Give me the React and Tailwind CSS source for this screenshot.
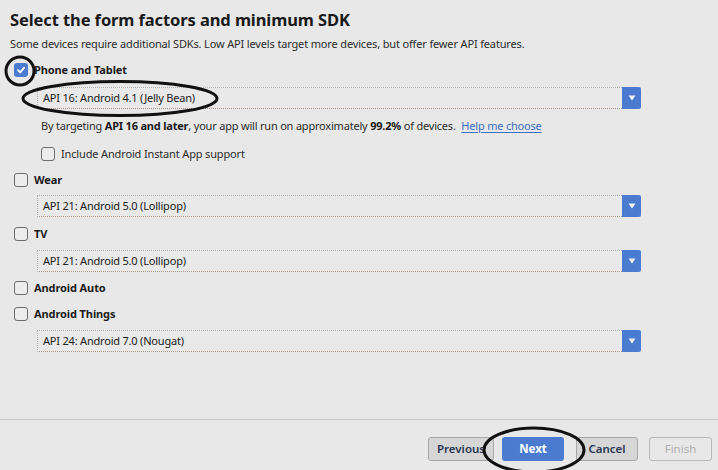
import React from "react";

const Checkbox = ({ checked }) =>
  checked ? (
    <div className="w-[14px] h-[14px] rounded-[3px] bg-[#4a7bd0] flex items-center justify-center shrink-0">
      <svg width="10" height="10" viewBox="0 0 10 10">
        <path d="M2 5.2 L4.2 7.4 L8.2 2.6" fill="none" stroke="#fff" strokeWidth="1.8" strokeLinecap="round" strokeLinejoin="round" />
      </svg>
    </div>
  ) : (
    <div className="w-[14px] h-[14px] rounded-[3px] border border-[#6e6e6e] bg-[#ececec] shrink-0" />
  );

const Option = ({ label, checked, className = "" }) => (
  <div className={`flex items-center h-4 pl-[14px] gap-[6px] ${className}`}>
    <Checkbox checked={checked} />
    <span className="text-[11px] tracking-[-0.1px] font-bold text-[#1c1c1c]">{label}</span>
  </div>
);

const Dropdown = ({ value, className = "" }) => (
  <div className={`ml-[37px] w-[604px] h-[22px] flex ${className}`}>
    <div className="flex-1 flex items-center pl-[5px] border border-dotted border-[#b0b0b0] border-r-0 border-b-[#a89888] bg-[#e9e9e9] text-[11px] tracking-[-0.2px] text-[#222]">
      {value}
    </div>
    <div className="w-[19px] bg-[#4a7bd0] rounded-r-[2px] flex items-center justify-center">
      <svg width="8" height="6" viewBox="0 0 8 6">
        <path d="M0.5 0.5 H7.5 L4 5.5 Z" fill="#f2f2f2" />
      </svg>
    </div>
  </div>
);

export default function App() {
  return (
    <div
      className="relative w-[718px] h-[470px] bg-[#e8e8e8] flex flex-col overflow-hidden"
      style={{ fontFamily: '"Noto Sans", "Open Sans", sans-serif' }}
    >
      <div className="flex flex-col flex-1">
        <h1 className="mt-[8px] ml-[10px] text-[16.5px] tracking-[-0.1px] leading-[24px] font-bold text-[#1a1a1a]">
          Select the form factors and minimum SDK
        </h1>
        <p className="mt-[4px] ml-[10px] text-[11px] tracking-[-0.15px] leading-[16px] text-[#2c2c2c]">
          Some devices require additional SDKs. Low API levels target more devices, but offer fewer API features.
        </p>

        <Option label="Phone and Tablet" checked className="mt-[10px]" />
        <Dropdown value="API 16: Android 4.1 (Jelly Bean)" className="mt-[9px]" />
        <p className="mt-[9px] ml-[41px] text-[11px] tracking-[-0.2px] leading-[16px] text-[#2c2c2c]">
          By targeting <b className="text-[#1a1a1a]">API 16 and later</b>, your app will run on approximately{" "}
          <b className="text-[#1a1a1a]">99.2%</b> of devices.{" "}
          <span className="ml-[3px] text-[#3d6fc4] underline underline-offset-2">Help me choose</span>
        </p>
        <div className="mt-[12px] ml-[41px] flex items-center h-4 gap-[6px]">
          <Checkbox />
          <span className="text-[11px] tracking-[-0.15px] text-[#2c2c2c]">Include Android Instant App support</span>
        </div>

        <Option label="Wear" className="mt-[10px]" />
        <Dropdown value="API 21: Android 5.0 (Lollipop)" className="mt-[7px]" />
        <Option label="TV" className="mt-[9px]" />
        <Dropdown value="API 21: Android 5.0 (Lollipop)" className="mt-[8px]" />
        <Option label="Android Auto" className="mt-[8px]" />
        <Option label="Android Things" className="mt-[10px]" />
        <Dropdown value="API 24: Android 7.0 (Nougat)" className="mt-[8px]" />
      </div>

      {/* footer */}
      <div className="h-[51px] border-t border-[#c8c8c8] flex justify-end pr-[6px] pt-[17px] text-[11.5px]">
        <div className="flex items-start gap-[8px]">
          <button className="w-[66px] h-[24px] rounded-[3px] border border-[#a8a8a8] bg-[#d6d6d6] font-semibold text-[#2a3550]">
            Previous
          </button>
          <button className="w-[62px] h-[24px] rounded-[3px] bg-[#4a7bd0] font-bold text-white">
            Next
          </button>
          <button className="ml-[4px] w-[62px] h-[24px] rounded-[3px] border border-[#a8a8a8] bg-[#d6d6d6] font-semibold text-[#2a3550]">
            Cancel
          </button>
          <button className="ml-[3px] w-[63px] h-[24px] rounded-[3px] border border-[#b8b8b8] bg-[#e8e8e8] text-[#b0b0b0]">
            Finish
          </button>
        </div>
      </div>

      {/* hand-drawn annotation ellipses */}
      <svg className="absolute inset-0 pointer-events-none" width="718" height="470">
        <ellipse cx="20" cy="71" rx="14" ry="14" fill="none" stroke="#111" strokeWidth="3" />
        <ellipse cx="120" cy="98.5" rx="97" ry="17" fill="none" stroke="#111" strokeWidth="3" />
        <ellipse cx="534" cy="450" rx="50" ry="22" fill="none" stroke="#111" strokeWidth="3" />
      </svg>
    </div>
  );
}
